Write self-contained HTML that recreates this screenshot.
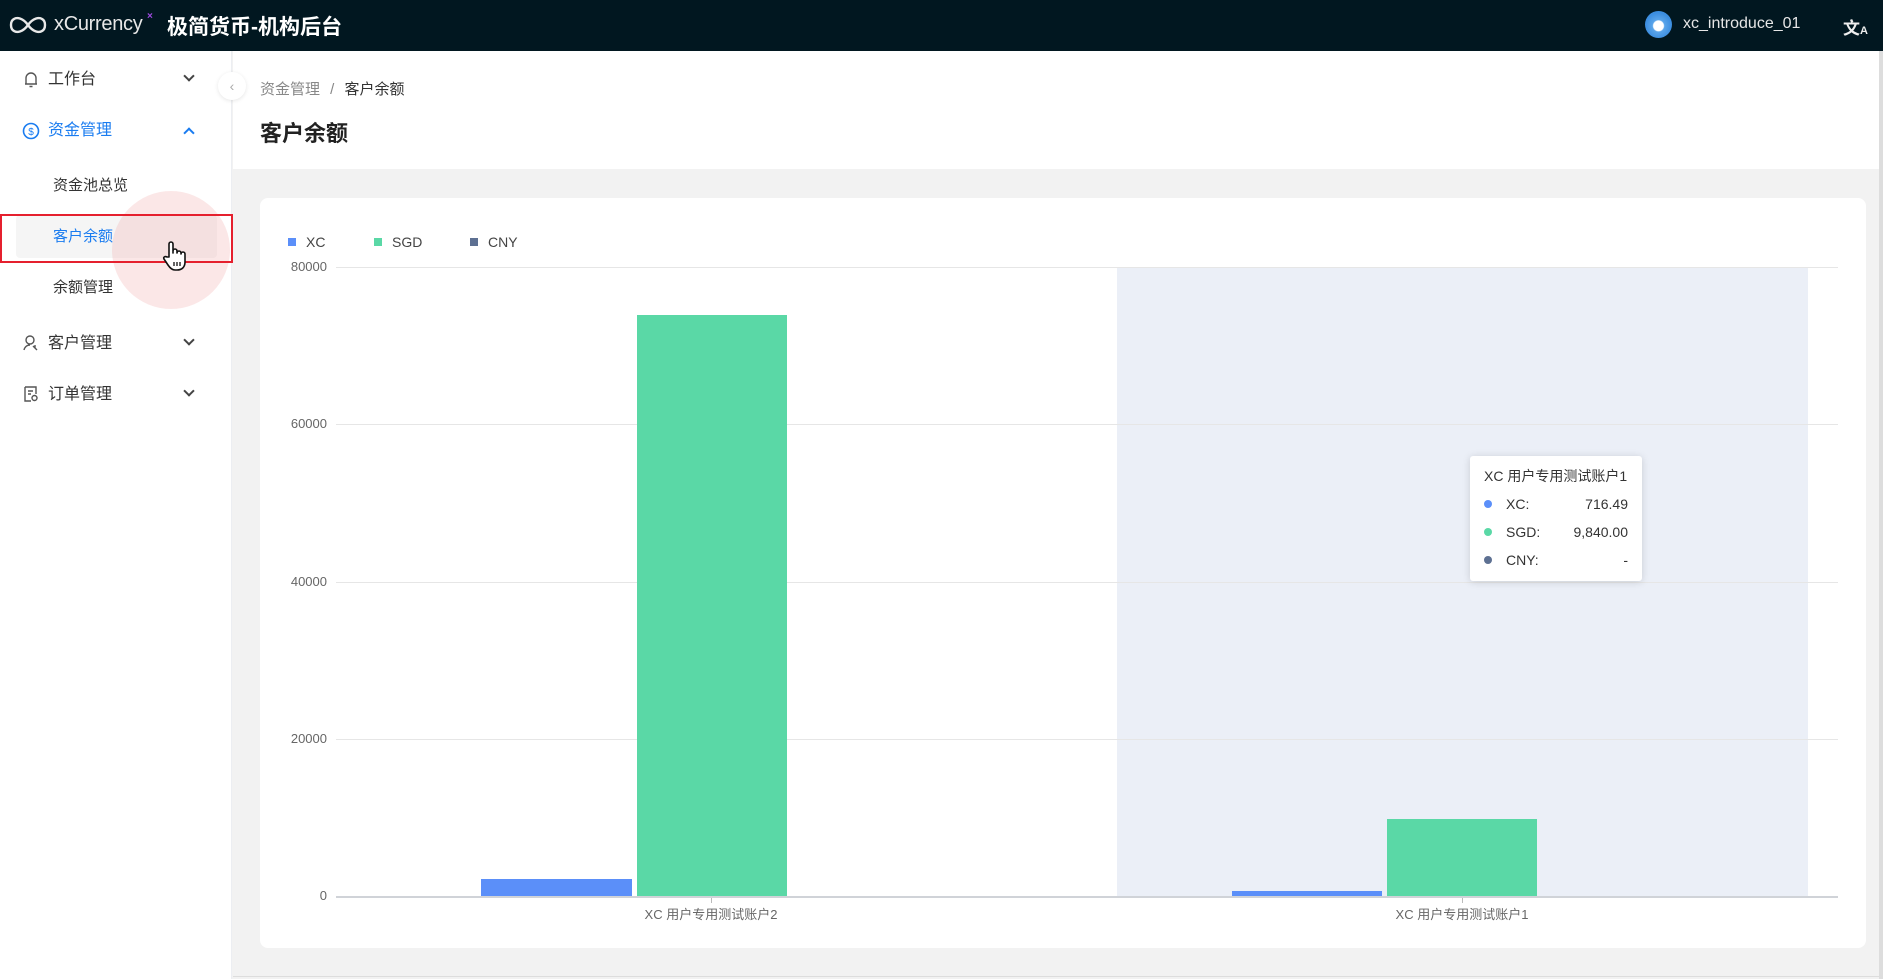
<!DOCTYPE html>
<html><head><meta charset="utf-8"><style>
*{margin:0;padding:0;box-sizing:border-box}
body{width:1883px;height:979px;overflow:hidden;background:#f2f2f2;font-family:"Liberation Sans","Noto Sans CJK SC",sans-serif;position:relative;color:#333}
.abs{position:absolute}
.hdr{left:0;top:0;width:1883px;height:51px;background:#011720}
.side{left:0;top:51px;width:232px;height:928px;background:#fff;border-right:1px solid #eceef2}
.mi{position:absolute;left:48px;font-size:16px;color:#333;line-height:20px}
.chev{position:absolute;left:185px;width:8px;height:8px;border-right:2px solid #444;border-bottom:2px solid #444;transform:rotate(45deg)}
.ylab{position:absolute;right:1556px;font-size:13px;color:#666;line-height:14px}
.grid{position:absolute;left:336px;width:1502px;height:1px;background:#e6e6e6}
.tt{font-size:14px;color:#333;line-height:16px}
</style></head><body>
<div class="abs hdr">
  <svg class="abs" style="left:8px;top:14px" width="40" height="22" viewBox="0 0 40 22"><path d="M20 11 C15 4 9 3 6 5 C2 7 2 15 6 17 C9 19 15 18 20 11 C25 4 31 3 34 5 C38 7 38 15 34 17 C31 19 25 18 20 11Z" fill="none" stroke="#e8e8e8" stroke-width="2.4"/></svg>
  <div class="abs" style="left:54px;top:13px;font-size:20px;color:#e8e8e8;letter-spacing:-0.3px">xCurrency</div>
  <div class="abs" style="left:147px;top:11px;font-size:10px;color:#a04ae0;font-weight:bold">×</div>
  <div class="abs" style="left:167px;top:11px;font-size:21px;color:#fff;font-weight:bold">极简货币-机构后台</div>
  <div class="abs" style="left:1645px;top:11px;width:27px;height:27px;border-radius:50%;background:radial-gradient(circle at 50% 55%,#fff 0 5px,#5aa5ea 6px,#3c8ee0 13px)"></div>
  <div class="abs" style="left:1683px;top:15px;font-size:16px;color:#e6e6e6">xc_introduce_01</div>
  <div class="abs" style="left:1843px;top:14px;font-size:17px;color:#eee;font-weight:bold">文<span style="font-size:11px">A</span></div>
</div>
<div class="abs side">
  <div class="abs" style="left:16px;top:164px;width:201px;height:43px;background:#f5f5f5;border-radius:4px"></div>
  <svg class="abs" style="left:23px;top:20px" width="16" height="18" viewBox="0 0 16 18"><path d="M3 13V7a5 5 0 0 1 10 0v6H3zM2 13h12M6.5 15.5h3" fill="none" stroke="#555" stroke-width="1.4"/></svg>
  <div class="mi" style="top:19px">工作台</div><div class="chev" style="top:21px"></div>
  <svg class="abs" style="left:22px;top:71px" width="18" height="18" viewBox="0 0 18 18"><circle cx="9" cy="9" r="7.5" fill="none" stroke="#1a7cf0" stroke-width="1.6"/><text x="9" y="13" font-size="10" text-anchor="middle" fill="#1a7cf0" font-family="Liberation Sans">$</text></svg>
  <div class="mi" style="top:70px;color:#1a7cf0">资金管理</div><div class="chev" style="top:78px;transform:rotate(225deg);border-color:#1a7cf0"></div>
  <div class="mi" style="top:125px;left:53px;font-size:15px">资金池总览</div>
  <div class="mi" style="top:176px;left:53px;font-size:15px;color:#1a7cf0">客户余额</div>
  <div class="mi" style="top:227px;left:53px;font-size:15px">余额管理</div>
  <svg class="abs" style="left:22px;top:283px" width="18" height="18" viewBox="0 0 18 18"><circle cx="8" cy="6" r="4" fill="none" stroke="#555" stroke-width="1.4"/><path d="M2 16c1-4 4-5 6-5M11 12l4 4M13 11v3" fill="none" stroke="#555" stroke-width="1.4"/></svg>
  <div class="mi" style="top:283px">客户管理</div><div class="chev" style="top:285px"></div>
  <svg class="abs" style="left:22px;top:334px" width="18" height="18" viewBox="0 0 18 18"><path d="M3 2h11v7M3 2v14h6M6 6h5M6 9h3" fill="none" stroke="#555" stroke-width="1.4"/><circle cx="12.5" cy="13" r="2.5" fill="none" stroke="#555" stroke-width="1.4"/></svg>
  <div class="mi" style="top:334px">订单管理</div><div class="chev" style="top:336px"></div>
</div>
<div class="abs" style="left:112px;top:191px;width:118px;height:118px;border-radius:50%;background:rgba(240,170,170,0.28)"></div>
<div class="abs" style="left:0;top:214px;width:233px;height:49px;border:2px solid #e5202e"></div>
<svg class="abs" style="left:162px;top:240px" width="28" height="32" viewBox="0 0 28 32"><path d="M7 17V4a2 2 0 0 1 4 0v9 -2a2 2 0 0 1 4 0v2a2 2 0 0 1 4 0v1a2 2 0 0 1 4 0v8c0 5-3 8-8 8h-2c-3 0-5-2-7-5l-4-6c-1-2 1-3 3-2z" fill="#fff" stroke="#111" stroke-width="1.6" stroke-linejoin="round"/><path d="M12 22v4M15 22v4M18 22v4" stroke="#111" stroke-width="1.3"/></svg>
<div class="abs" style="left:233px;top:51px;width:1646px;height:118px;background:#fff"></div>
<div class="abs" style="left:218px;top:72px;width:28px;height:28px;border-radius:50%;background:#fff;box-shadow:0 1px 4px rgba(0,0,0,.1);color:#aaa;font-size:14px;text-align:center;line-height:28px">‹</div>
<div class="abs" style="left:260px;top:78px;font-size:15px;color:#888">资金管理 <span style="margin:0 6px">/</span> <span style="color:#333">客户余额</span></div>
<div class="abs" style="left:260px;top:116px;font-size:22px;font-weight:bold;color:#222">客户余额</div>
<div class="abs" style="left:1879px;top:51px;width:4px;height:928px;background:#ddd"></div>
<div class="abs" style="left:233px;top:976px;width:1646px;height:1px;background:#ddd"></div>
<div class="abs" style="left:260px;top:198px;width:1606px;height:750px;background:#fff;border-radius:8px"></div>
<div class="abs" style="left:288px;top:238px;width:8px;height:8px;background:#5b8ff9"></div><div class="abs" style="left:306px;top:234px;font-size:14px;color:#444">XC</div>
<div class="abs" style="left:374px;top:238px;width:8px;height:8px;background:#5ad8a6"></div><div class="abs" style="left:392px;top:234px;font-size:14px;color:#444">SGD</div>
<div class="abs" style="left:470px;top:238px;width:8px;height:8px;background:#5d7092"></div><div class="abs" style="left:488px;top:234px;font-size:14px;color:#444">CNY</div>
<div class="abs" style="left:1117px;top:267px;width:691px;height:630px;background:#ebeff7"></div>
<div class="grid" style="top:267px"></div><div class="grid" style="top:424px"></div><div class="grid" style="top:582px"></div><div class="grid" style="top:739px"></div>
<div class="grid" style="top:896px;height:2px;background:#d0d3d8"></div>
<div class="ylab" style="top:260px">80000</div><div class="ylab" style="top:417px">60000</div><div class="ylab" style="top:575px">40000</div><div class="ylab" style="top:732px">20000</div><div class="ylab" style="top:889px">0</div>
<div class="abs" style="left:481px;top:879px;width:151px;height:17px;background:#5b8ff9"></div>
<div class="abs" style="left:637px;top:315px;width:150px;height:581px;background:#5ad8a6"></div>
<div class="abs" style="left:1232px;top:891px;width:150px;height:5px;background:#5b8ff9"></div>
<div class="abs" style="left:1387px;top:819px;width:150px;height:77px;background:#5ad8a6"></div>
<div class="abs" style="left:711px;top:898px;width:1px;height:5px;background:#bbb"></div>
<div class="abs" style="left:1462px;top:898px;width:1px;height:5px;background:#bbb"></div>
<div class="abs" style="left:561px;top:904px;width:300px;text-align:center;font-size:13px;color:#666">XC 用户专用测试账户2</div>
<div class="abs" style="left:1312px;top:904px;width:300px;text-align:center;font-size:13px;color:#666">XC 用户专用测试账户1</div>
<div class="abs" style="left:1470px;top:456px;width:172px;height:125px;background:#fff;border-radius:3px;box-shadow:0 1px 8px rgba(0,0,0,.15)">
  <div class="abs tt" style="left:14px;top:12px">XC 用户专用测试账户1</div>
  <div class="abs" style="left:14px;top:44px;width:8px;height:8px;border-radius:50%;background:#5b8ff9"></div><div class="abs tt" style="left:36px;top:40px">XC:</div><div class="abs tt" style="right:14px;top:40px">716.49</div>
  <div class="abs" style="left:14px;top:72px;width:8px;height:8px;border-radius:50%;background:#5ad8a6"></div><div class="abs tt" style="left:36px;top:68px">SGD:</div><div class="abs tt" style="right:14px;top:68px">9,840.00</div>
  <div class="abs" style="left:14px;top:100px;width:8px;height:8px;border-radius:50%;background:#5d7092"></div><div class="abs tt" style="left:36px;top:96px">CNY:</div><div class="abs tt" style="right:14px;top:96px">-</div>
</div>
</body></html>
